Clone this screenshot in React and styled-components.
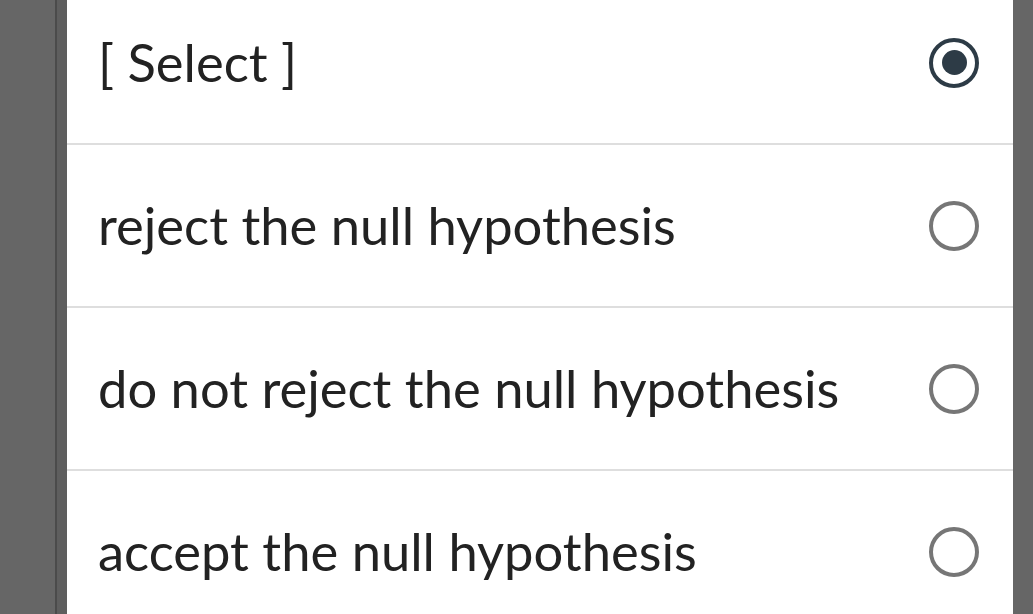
import React, { useState } from "react";
import styled, { createGlobalStyle } from "styled-components";

const GlobalStyle = createGlobalStyle`
  html, body {
    margin: 0;
    padding: 0;
    background: #666666;
    overflow: hidden;
  }
  body {
    font-family: "Lato", "Open Sans", sans-serif;
  }
`;

const Page = styled.div`
  width: 1033px;
  height: 614px;
  display: flex;
  background: #666666;
  overflow: hidden;
`;

const Sheet = styled.div`
  margin-left: 67px;
  width: 946px;
  background: #ffffff;
  box-shadow: -10px 0 0 #5e5e5e, -12px 0 0 #4b4b4b;
  display: flex;
  flex-direction: column;
  margin-top: -18px;
`;

const Row = styled.label`
  height: 161px;
  flex-shrink: 0;
  border-bottom: 2px solid #dedede;
  display: flex;
  align-items: center;
  justify-content: space-between;
  padding: 0 34px 0 31px;
  cursor: pointer;
`;

const Text = styled.span`
  font-family: "Lato", "Open Sans", sans-serif;
  font-size: 52.5px;
  color: #222222;
  margin-top: -2px;
`;

const Radio = styled.span`
  width: 50px;
  height: 50px;
  box-sizing: border-box;
  border-radius: 50%;
  border: 4.5px solid ${(p) => (p.checked ? "#2d3b46" : "#767676")};
  display: flex;
  align-items: center;
  justify-content: center;

  &::after {
    content: "";
    width: 25px;
    height: 25px;
    border-radius: 50%;
    background: #2d3b46;
    display: ${(p) => (p.checked ? "block" : "none")};
  }
`;

const options = [
  "[ Select ]",
  "reject the null hypothesis",
  "do not reject the null hypothesis",
  "accept the null hypothesis",
];

export default function App() {
  const [picked, setPicked] = useState(0);
  return (
    <>
      <GlobalStyle />
      <Page>
        <Sheet>
          {options.map((o, i) => (
            <Row key={o} onClick={() => setPicked(i)}>
              <Text>{o}</Text>
              <Radio checked={picked === i} />
            </Row>
          ))}
        </Sheet>
      </Page>
    </>
  );
}
